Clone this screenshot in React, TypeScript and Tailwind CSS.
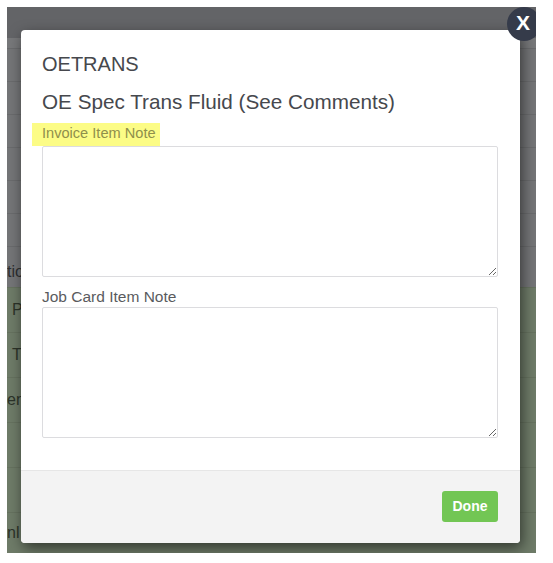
import React from "react";

const grayRows = [48, 81, 114, 147, 180, 213, 246];
const greenRows = [
  { h: 45, text: "P", pad: 5 },
  { h: 45, text: "T", pad: 5 },
  { h: 45, text: "en", pad: 0 },
  { h: 45, text: "", pad: 0 },
  { h: 45, text: "", pad: 0 },
  { h: 41, text: "nl", pad: 0 },
];

function Backdrop() {
  return (
    <div className="flex flex-col">
      <div className="h-[31px] bg-[#636467]" />
      <div className="h-[10px] bg-[#77787a]" />
      {grayRows.map((y, i) => (
        <div key={i} className="h-[33px] border-t border-[#6a6b6d] bg-[#747577]" />
      ))}
      <div className="flex h-[8px] bg-[#747577]" />
      <div className="-mt-[30px] flex h-[30px] items-center text-[16px] text-[#2e2f31]">tio</div>
      {greenRows.map((r, i) => (
        <div
          key={i}
          style={{ height: r.h, paddingLeft: r.pad }}
          className="flex items-center border-t border-[#66725f] bg-[#6e7b68] text-[16px] text-[#2c3329]"
        >
          {r.text}
        </div>
      ))}
    </div>
  );
}

function NoteField({ label, highlight }: { label: string; highlight?: boolean }) {
  return (
    <div className="flex flex-col">
      {highlight ? (
        <div className="flex h-[24px] items-center">
          <span className="-ml-[10px] flex h-[23px] items-center bg-[#fcfc86] pl-[10px] pr-[4px] text-[14.6px] text-[#8f8f4c]">
            {label}
          </span>
        </div>
      ) : (
        <div className="flex h-[20px] items-center text-[15.5px] text-[#5a5b5e]">{label}</div>
      )}
      <textarea className="h-[131px] w-full resize-y rounded-[2px] border border-[#dcdcdf] bg-white outline-none" />
    </div>
  );
}

export default function App() {
  return (
    <div className="h-[563px] w-[553px] bg-white p-[7px] pb-[10px] pr-[17px] font-['Liberation_Sans',Arial,sans-serif]">
      <div className="relative h-[546px] w-[529px] overflow-hidden">
        <Backdrop />

        <div className="absolute left-[14px] top-[23px] flex h-[513px] w-[499px] flex-col overflow-hidden rounded-[4px] bg-white shadow-[2px_5px_14px_rgba(0,0,0,0.55)]">
          <div className="flex flex-1 flex-col px-[21px] pr-[22px] pt-[20px]">
            <div className="h-[28px] text-[20px] leading-[28px] text-[#46484d]">OETRANS</div>
            <div className="mt-[10px] h-[28px] text-[20.7px] leading-[28px] text-[#46484d]">
              OE Spec Trans Fluid (See Comments)
            </div>
            <div className="mt-[6px]">
              <NoteField label="Invoice Item Note" highlight />
            </div>
            <div className="mt-[10px]">
              <NoteField label="Job Card Item Note" />
            </div>
          </div>
          <div className="flex h-[73px] justify-end border-t border-[#e6e6e6] bg-[#f3f3f3] pr-[22px] pt-[20px]">
            <button className="h-[31px] w-[56px] rounded-[3px] bg-[#72c654] text-[14px] font-bold text-white">
              Done
            </button>
          </div>
        </div>

        <div className="absolute left-[500px] top-[0px] flex h-[34px] w-[34px] items-center justify-center rounded-full bg-[#353b4a] pb-[3px] pr-[2px] text-[21px] font-bold text-white">
          X
        </div>
      </div>
    </div>
  );
}
